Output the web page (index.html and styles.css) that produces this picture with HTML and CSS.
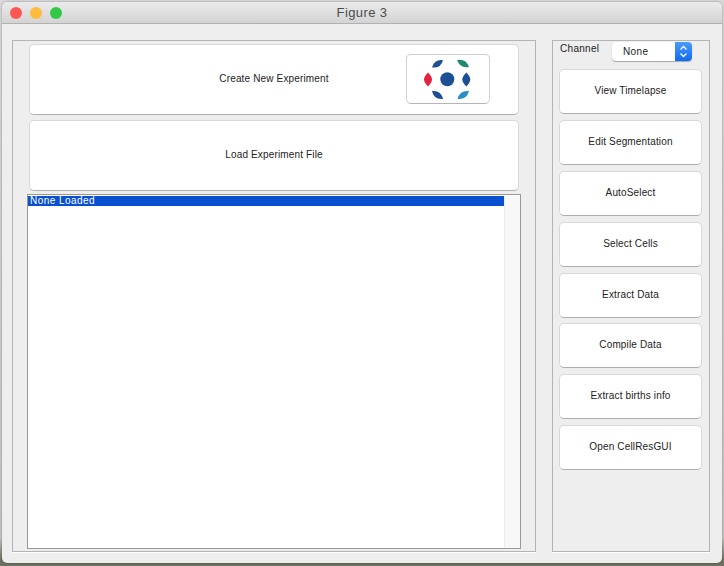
FILE: index.html
```html
<!DOCTYPE html>
<html lang="en">

<head>
    <meta charset="UTF-8">
    <meta name="viewport" content="width=device-width, initial-scale=1.0">
    <title>Figure 3</title>
    <link rel="stylesheet" href="styles.css">
</head>

<body>
    <div class="window">
        <!-- Title bar -->
        <div class="titlebar">
            <div class="lights">
                <span class="light light-red"></span>
                <span class="light light-yellow"></span>
                <span class="light light-green"></span>
            </div>
            <span class="title">Figure 3</span>
        </div>

        <div class="content">
            <!-- Experiment panel -->
            <div class="panel panel-left">
                <button class="btn btn-big">
                    Create New Experiment
                    <span class="logo">
                        <svg width="84" height="50" viewBox="0 0 84 50">
                            <circle cx="41.3" cy="25.2" r="7" fill="#1c4f94" />
                            <path d="M26 13.5 Q28 5 37 6 Q35 14.5 26 13.5" fill="#1c4f94" />
                            <path d="M51 6 Q60 4.3 63 13 Q54 14.7 51 6" fill="#1f8a70" />
                            <path d="M26 37 Q35 36 37 45 Q28 46 26 37" fill="#1c4f94" />
                            <path d="M51.5 45 Q53.8 36 63 37 Q60.7 46 51.5 45" fill="#2a8fc8" />
                            <path d="M22 18.5 Q26 22.5 26 25.5 Q26 28.5 22 32.5 Q18 28.5 18 25.5 Q18 22.5 22 18.5" fill="#e2243f" />
                            <path d="M60.3 18.5 Q64.3 22.5 64.3 25.5 Q64.3 28.5 60.3 32.5 Q56.3 28.5 56.3 25.5 Q56.3 22.5 60.3 18.5" fill="#1c4f94" />
                        </svg>
                    </span>
                </button>
                <button class="btn btn-big">Load Experiment File</button>

                <div class="listbox">
                    <div class="list-items">
                        <div class="list-row">None Loaded</div>
                    </div>
                    <div class="scrollbar"></div>
                </div>
            </div>

            <!-- Actions panel -->
            <div class="panel panel-right">
                <div class="channel-row">
                    <span class="channel-label">Channel</span>
                    <div class="select">
                        <span class="select-value">None</span>
                        <span class="select-arrows">
                            <svg width="17" height="19" viewBox="0 0 17 19">
                                <path d="M5.5 7.5 L8.5 4.5 L11.5 7.5" fill="none" stroke="#fff" stroke-width="1.3" />
                                <path d="M5.5 11.5 L8.5 14.5 L11.5 11.5" fill="none" stroke="#fff" stroke-width="1.3" />
                            </svg>
                        </span>
                    </div>
                </div>
                <div class="actions">
                    <button class="btn btn-small">View Timelapse</button>
                    <button class="btn btn-small">Edit Segmentation</button>
                    <button class="btn btn-small">AutoSelect</button>
                    <button class="btn btn-small">Select Cells</button>
                    <button class="btn btn-small">Extract Data</button>
                    <button class="btn btn-small">Compile Data</button>
                    <button class="btn btn-small">Extract births info</button>
                    <button class="btn btn-small">Open CellResGUI</button>
                </div>
            </div>
        </div>
    </div>
</body>

</html>
```

FILE: styles.css
```css
html,
body {
    height: 100%;
}

body {
    margin: 0;
    overflow: hidden;
    font-family: "Liberation Sans", Arial, sans-serif;
    background: linear-gradient(#d8d8d8 0, #c4c4c4 95%, #6f705f 99%);
}

.window {
    width: 720px;
    height: 561px;
    margin: 2px;
    background-color: #eeeeee;
    border-radius: 5px;
    overflow: hidden;
    box-shadow: 0 0 2px rgba(0, 0, 0, 0.45);
}

/* Title bar */
.titlebar {
    position: relative;
    display: flex;
    align-items: center;
    justify-content: center;
    height: 21px;
    background: linear-gradient(#ebebeb, #d3d3d3);
    border-bottom: 1px solid #b1b1b1;
}

.lights {
    position: absolute;
    left: 8px;
    top: 5px;
    display: flex;
    gap: 8px;
}

.light {
    width: 12px;
    height: 12px;
    border-radius: 50%;
}

.light-red {
    background-color: #fc5753;
}

.light-yellow {
    background-color: #fdbc40;
}

.light-green {
    background-color: #33c748;
}

.title {
    font-size: 13px;
    letter-spacing: 0.4px;
    color: #4d4d4d;
}

/* Panels */
.content {
    display: flex;
    gap: 16px;
    padding: 16px 0 0 10px;
}

.panel {
    box-sizing: border-box;
    height: 512px;
    border: 1px solid #b4b4b4;
    box-shadow: 0 1px 0 #fff;
}

.panel-left {
    width: 524px;
    padding: 3px 16px 0 16px;
}

.panel-right {
    width: 158px;
    padding: 0 7px 0 6px;
}

/* Buttons */
.btn {
    position: relative;
    display: block;
    width: 100%;
    font-family: inherit;
    font-size: 10px;
    letter-spacing: 0.15px;
    color: #222;
    background-color: #fff;
    border: 1px solid #d8d8d8;
    border-bottom-color: #aeaeae;
    border-radius: 5px;
}

.btn-big {
    height: 71px;
    margin-bottom: 5px;
    padding: 0 0 2px;
}

.btn-small {
    height: 45px;
    padding: 0 0 2px;
}

.logo {
    position: absolute;
    left: 376px;
    top: 9px;
    display: block;
    width: 84px;
    height: 50px;
    border: 1px solid #d0d0d0;
    border-bottom-color: #b5b5b5;
    border-radius: 5px;
    box-sizing: border-box;
}

.logo svg {
    display: block;
    margin: -1px;
}

/* List box */
.listbox {
    display: flex;
    box-sizing: border-box;
    width: 494px;
    height: 355px;
    margin: -2px 0 0 -2px;
    padding-top: 1px;
    background-color: #fff;
    border: 1px solid #999;
}

.list-items {
    flex: 1;
}

.list-row {
    height: 10px;
    padding-left: 2px;
    font-size: 10px;
    line-height: 10px;
    letter-spacing: 0.45px;
    color: #fff;
    background-color: #0950d0;
}

.scrollbar {
    width: 15px;
    background-color: #f8f8f8;
    border-left: 1px solid #ececec;
}

/* Channel selector */
.channel-row {
    display: flex;
    align-items: flex-start;
    height: 27.4px;
    padding-top: 1px;
}

.channel-label {
    width: 52px;
    margin: 1px 0 0 1px;
    font-size: 10px;
    letter-spacing: 0.3px;
    color: #222;
}

.select {
    display: flex;
    align-items: center;
    justify-content: space-between;
    width: 80px;
    height: 19px;
    background-color: #fff;
    border-radius: 4px;
    box-shadow: 0 1px 1px rgba(0, 0, 0, 0.3);
    overflow: hidden;
}

.select-value {
    padding-left: 11px;
    font-size: 10px;
    letter-spacing: 0.35px;
    color: #222;
}

.select-arrows {
    width: 17px;
    height: 19px;
    background: linear-gradient(#4a9cf9, #0f6af0);
}

.select-arrows svg {
    display: block;
}

/* Action buttons */
.actions {
    display: flex;
    flex-direction: column;
    gap: 5.8px;
}
```
